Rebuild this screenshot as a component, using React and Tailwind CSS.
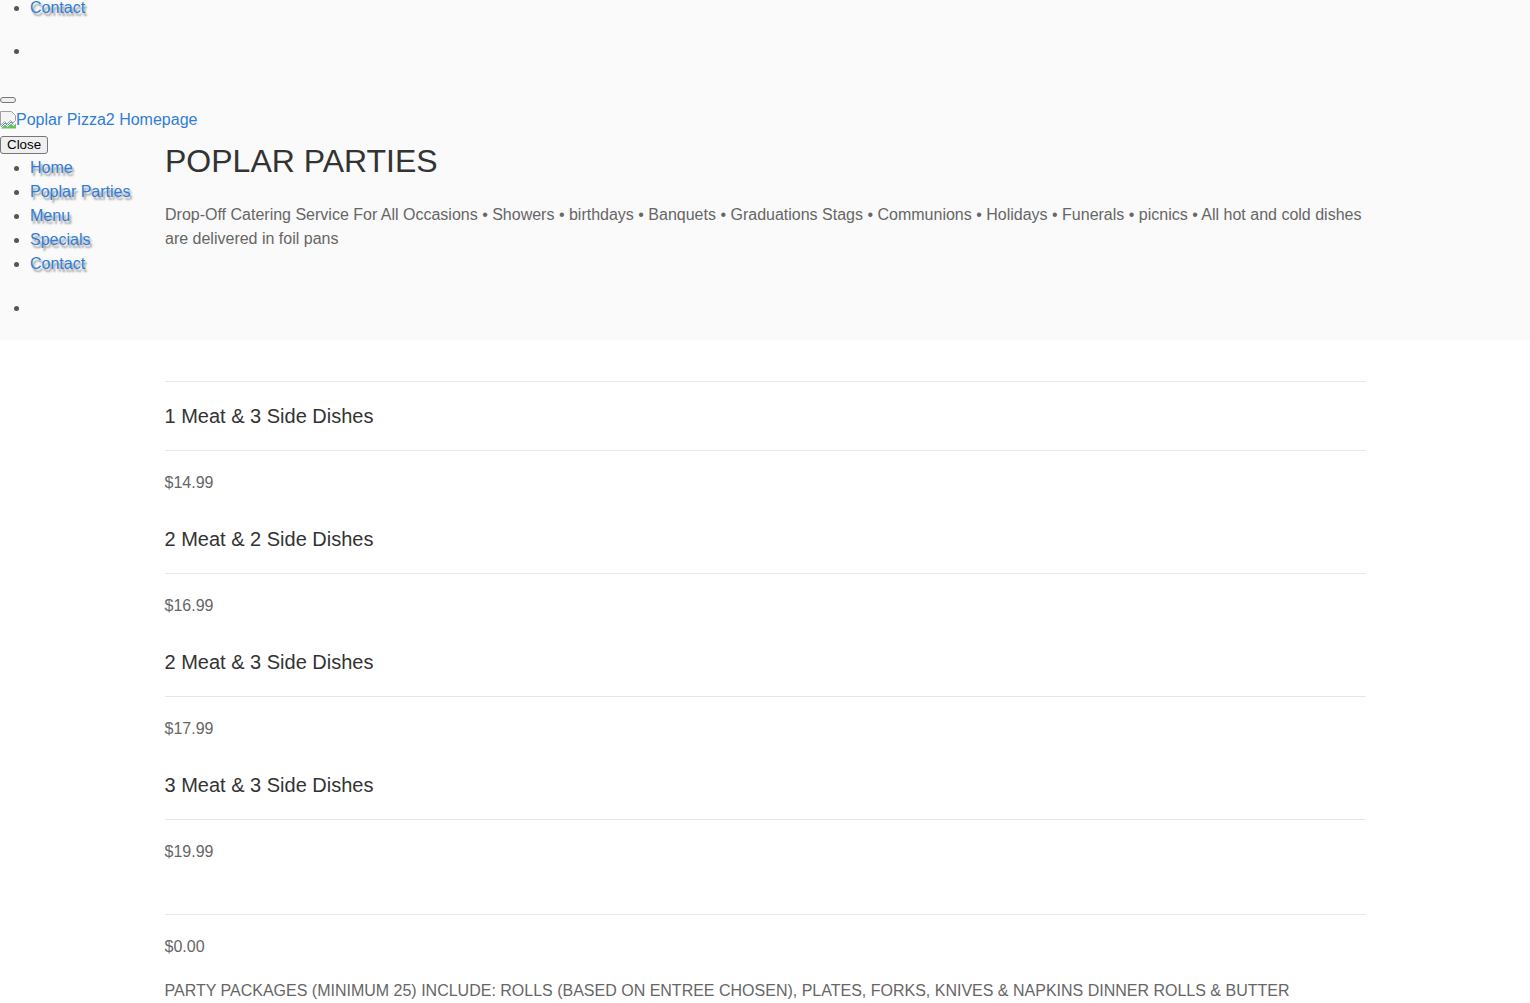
import React from "react";

const linkCls =
  "text-[#2f7dd8] no-underline [text-shadow:2px_3px_2px_rgba(0,0,0,0.4)]";

function BrokenImg() {
  return (
    <svg width="16" height="18" viewBox="0 0 16 18" className="inline-block align-[-4px]">
      <path d="M0.5 0.5h11l4 4v5l-2.5 2.5-2.5-2.5-3.5 3.5-2.5-2.5-4 4z" fill="#f4f4f4" stroke="#a0a0a0" strokeWidth="1" />
      <path d="M1 17.5l4-4 2.5 2.5 3.5-3.5 2.5 2.5 2.5-2.5v5z" fill="#6cbf5a" />
      <path d="M1 16l4-4 2.5 2.5 3.5-3.5 2.5 2.5" fill="none" stroke="#4a90d0" strokeWidth="1" />
    </svg>
  );
}

const navItems = ["Home", "Poplar Parties", "Menu", "Specials", "Contact"];

const items = [
  { title: "1 Meat & 3 Side Dishes", price: "$14.99" },
  { title: "2 Meat & 2 Side Dishes", price: "$16.99" },
  { title: "2 Meat & 3 Side Dishes", price: "$17.99" },
  { title: "3 Meat & 3 Side Dishes", price: "$19.99" },
];

export default function App() {
  return (
    <div className="min-h-[1003px] bg-white font-['Liberation_Sans',Arial,sans-serif] text-[16px] leading-6 text-[#666]">
      <section className="h-[340px] overflow-hidden bg-[#fafafa]">
        <ul className="list-disc pl-[30px] -mt-[4px] text-[#555]">
          <li className="h-6">
            <a className={linkCls}>Contact</a>
          </li>
          <li className="mt-[19px] h-6">{"\u00a0"}</li>
        </ul>
        <button className="mt-[34px] block h-[6px] w-[16px] rounded-[3px] border border-[#767676] bg-[#efefef]" />
        <a className="mt-[5px] block h-[24px] text-[#2f7dd8]">
          <BrokenImg />
          Poplar Pizza2 Homepage
        </a>
        <div className="flex">
          <div className="w-[165px] shrink-0">
            <button className="mt-[4px] block h-[18px] rounded-[3px] border border-[#767676] bg-[#efefef] px-[6px] text-[13.33px] leading-[14px] text-black">
              Close
            </button>
            <ul className="mt-[2px] list-disc pl-[30px] text-[#555]">
              {navItems.map((n) => (
                <li key={n} className="h-6">
                  <a className={linkCls}>{n}</a>
                </li>
              ))}
              <li className="mt-5 h-6">{"\u00a0"}</li>
            </ul>
          </div>
          <div className="w-[1201px] shrink-0">
            <h1 className="mt-[12px] text-[32px] leading-[35px] text-[#333]">POPLAR PARTIES</h1>
            <p className="mt-[24px] text-[16px] leading-6 text-[#666]">
              Drop-Off Catering Service For All Occasions • Showers • birthdays • Banquets • Graduations Stags •
              Communions • Holidays • Funerals • picnics • All hot and cold dishes are delivered in foil pans
            </p>
          </div>
        </div>
      </section>

      <main className="mx-auto w-[1201px]">
        <div className="mt-[41px] border-t border-[#e6e6e6]" />
        {items.map((it, i) => (
          <div key={it.title}>
            <h3 className={`${i === 0 ? "mt-[23px]" : "mt-[33px]"} text-[20px] leading-[22px] text-[#333]`}>
              {it.title}
            </h3>
            <div className="mt-[23px] border-t border-[#e6e6e6]" />
            <p className="mt-[20px] text-[#666]">{it.price}</p>
          </div>
        ))}
        <div className="mt-[50px] border-t border-[#e6e6e6]" />
        <p className="mt-[20px] text-[#666]">$0.00</p>
        <p className="mt-[20px] text-[#666]">
          PARTY PACKAGES (MINIMUM 25) INCLUDE: ROLLS (BASED ON ENTREE CHOSEN), PLATES, FORKS, KNIVES &amp; NAPKINS
          DINNER ROLLS &amp; BUTTER
        </p>
      </main>
    </div>
  );
}
